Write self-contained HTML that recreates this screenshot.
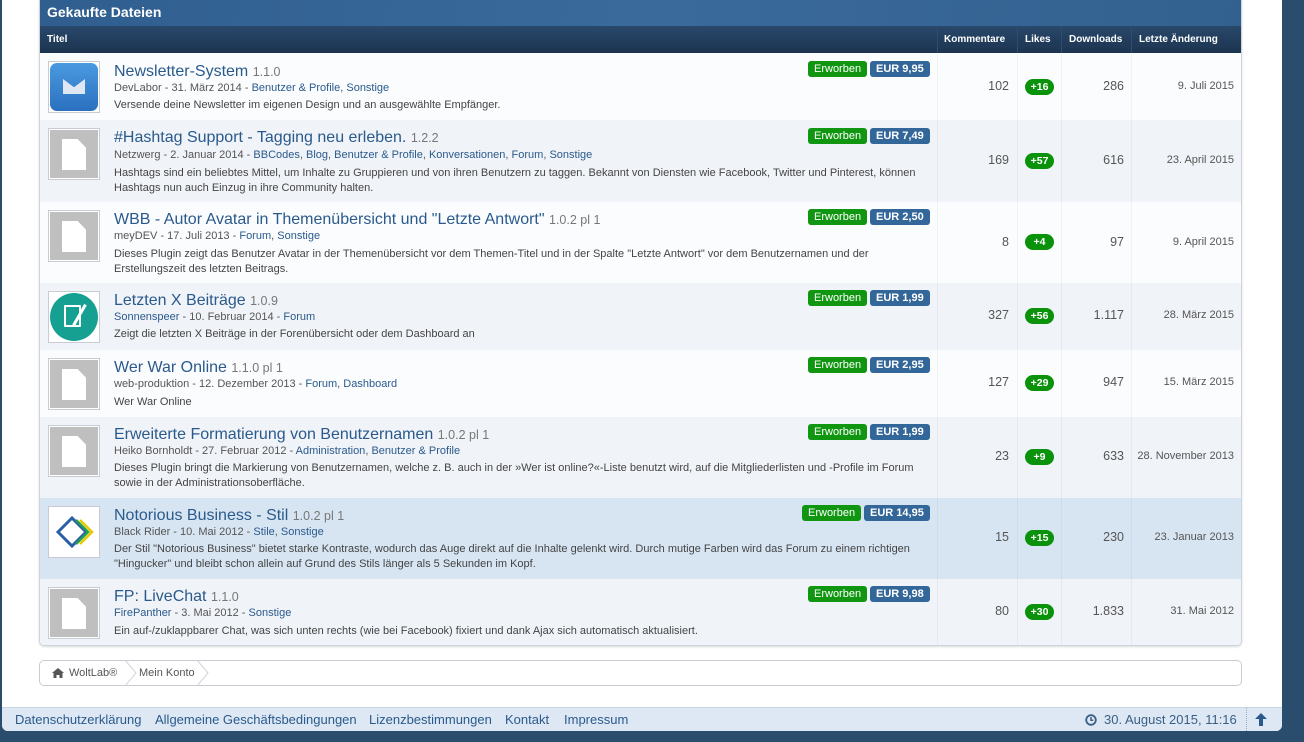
<!DOCTYPE html>
<html><head><meta charset="utf-8"><style>
*{margin:0;padding:0;box-sizing:border-box}
body{width:1304px;height:742px;background:#2a4d6e;font-family:"Liberation Sans",sans-serif;position:relative;overflow:hidden}
.page{position:absolute;left:2px;top:0;width:1280px;height:731px;background:#fff;border-radius:0 0 6px 6px}
.abs{position:absolute}
.box{position:absolute;left:37px;top:0;width:1203px;height:646px;border:1px solid #ccd4de;border-top:none;border-radius:0 0 5px 5px;overflow:hidden;box-shadow:0 1px 2px rgba(0,0,0,.15)}
.ttl{position:absolute;left:0;top:0;width:1202px;height:26px;background:linear-gradient(100deg,#2f5e8f,#3a6a9c 50%,#33618f);color:#fff;font-weight:bold;font-size:14px;line-height:25px;padding-left:7px}
.hd{position:absolute;left:0;top:26px;width:1202px;height:27px;background:linear-gradient(#29486b,#1c344f);color:#fff;font-weight:bold;font-size:10px;line-height:27px}
.hd span{position:absolute;top:0}
.row{position:absolute;left:0;width:1202px}
.row .ic{position:absolute;left:8px;top:8px;width:52px;height:52px;border:1px solid #c8ccd2;background:#fff;padding:1px}
.doc{width:48px;height:48px;background:#bfbfbf;position:relative}
.doc:after{content:"";position:absolute;left:12px;top:9px;width:24px;height:31px;background:#fff;clip-path:polygon(0 0,65% 0,100% 28%,100% 100%,0 100%)}
.t{position:absolute;left:74px;font-size:16px;color:#2a5a8c;white-space:nowrap;margin-top:1px}
.t small{font-size:12.5px;color:#777}
.m{position:absolute;left:74px;font-size:11px;color:#555;white-space:nowrap}
.m a{color:#2a5a8c;text-decoration:none}
.d{position:absolute;left:74px;width:810px;font-size:11px;line-height:14.5px;color:#444}
.b{position:absolute;height:16px;line-height:16px;font-size:11px;color:#fff;border-radius:3px;padding:0 6px;margin-left:-3px}
.g{background:#119611}.bl{background:#336699;font-weight:bold}
.n{position:absolute;font-size:12.5px;color:#555;text-align:right}
.lk{position:absolute;left:985px;width:29px;height:16px;border-radius:8px;background:#0a920a;color:#fff;font-weight:bold;font-size:10.5px;line-height:16px;text-align:center}
.col{position:absolute;top:0;bottom:0;width:1px;background:rgba(0,0,0,.04)}
</style></head><body>
<div class="page">
<div class="box">
<div class="ttl">Gekaufte Dateien</div>
<div class="hd"><span style="left:7px">Titel</span><span style="left:904px">Kommentare</span><span style="left:985px">Likes</span><span style="left:1029px">Downloads</span><span style="left:1099px">Letzte Änderung</span>
<div class="col" style="left:897px;background:#2f4e6f"></div><div class="col" style="left:977px;background:#2f4e6f"></div><div class="col" style="left:1021px;background:#2f4e6f"></div><div class="col" style="left:1091px;background:#2f4e6f"></div></div>

<div class="row" style="top:53px;height:67px;background:#fbfcfe">
<div class="ic"><div style="width:48px;height:48px;border-radius:7px;background:linear-gradient(#4a9ae0,#2a70bf);position:relative"><div style="position:absolute;left:13px;top:16px;width:22px;height:15px;background:#dfe8f2;clip-path:polygon(0 0,50% 55%,100% 0,100% 100%,0 100%)"></div></div></div>
<div class="t" style="top:9px">Newsletter-System <small>1.1.0</small></div>
<div class="m" style="top:29px">DevLabor - 31. März 2014 - <a>Benutzer &amp; Profile</a>, <a>Sonstige</a></div>
<div class="d" style="top:45px">Versende deine Newsletter im eigenen Design und an ausgewählte Empfänger.</div>
<div class="b g" style="left:771px;top:8px">Erworben</div><div class="b bl" style="left:833px;top:8px">EUR 9,95</div>
<div class="n" style="left:900px;width:69px;top:26px">102</div><div class="lk" style="top:26px">+16</div>
<div class="n" style="left:1020px;width:64px;top:26px">286</div><div class="n" style="left:1090px;width:104px;top:27px;font-size:11px">9. Juli 2015</div></div>

<div class="row" style="top:120px;height:82px;background:#f0f3f8">
<div class="ic"><div class="doc"></div></div>
<div class="t" style="top:8px">#Hashtag Support - Tagging neu erleben. <small>1.2.2</small></div>
<div class="m" style="top:29px">Netzwerg - 2. Januar 2014 - <a>BBCodes</a>, <a>Blog</a>, <a>Benutzer &amp; Profile</a>, <a>Konversationen</a>, <a>Forum</a>, <a>Sonstige</a></div>
<div class="d" style="top:46px">Hashtags sind ein beliebtes Mittel, um Inhalte zu Gruppieren und von ihren Benutzern zu taggen. Bekannt von Diensten wie Facebook, Twitter und Pinterest, können Hashtags nun auch Einzug in ihre Community halten.</div>
<div class="b g" style="left:771px;top:8px">Erworben</div><div class="b bl" style="left:833px;top:8px">EUR 7,49</div>
<div class="n" style="left:900px;width:69px;top:33px">169</div><div class="lk" style="top:33px">+57</div>
<div class="n" style="left:1020px;width:64px;top:33px">616</div><div class="n" style="left:1090px;width:104px;top:34px;font-size:11px">23. April 2015</div></div>

<div class="row" style="top:202px;height:81px;background:#fbfcfe">
<div class="ic"><div class="doc"></div></div>
<div class="t" style="top:8px">WBB - Autor Avatar in Themenübersicht und "Letzte Antwort" <small>1.0.2 pl 1</small></div>
<div class="m" style="top:28px">meyDEV - 17. Juli 2013 - <a>Forum</a>, <a>Sonstige</a></div>
<div class="d" style="top:45px">Dieses Plugin zeigt das Benutzer Avatar in der Themenübersicht vor dem Themen-Titel und in der Spalte "Letzte Antwort" vor dem Benutzernamen und der Erstellungszeit des letzten Beitrags.</div>
<div class="b g" style="left:771px;top:7px">Erworben</div><div class="b bl" style="left:833px;top:7px">EUR 2,50</div>
<div class="n" style="left:900px;width:69px;top:33px">8</div><div class="lk" style="top:32px">+4</div>
<div class="n" style="left:1020px;width:64px;top:33px">97</div><div class="n" style="left:1090px;width:104px;top:34px;font-size:11px">9. April 2015</div></div>

<div class="row" style="top:283px;height:67px;background:#f0f3f8">
<div class="ic"><div style="width:48px;height:48px;border-radius:50%;background:#15a091;position:relative"><div style="position:absolute;left:14px;top:12px;width:17px;height:22px;border:2px solid #fff;border-radius:1px"></div><div style="position:absolute;left:28px;top:10px;width:3px;height:24px;background:#fff;transform:rotate(30deg)"></div></div></div>
<div class="t" style="top:8px">Letzten X Beiträge <small>1.0.9</small></div>
<div class="m" style="top:28px"><a>Sonnenspeer</a> - 10. Februar 2014 - <a>Forum</a></div>
<div class="d" style="top:44px">Zeigt die letzten X Beiträge in der Forenübersicht oder dem Dashboard an</div>
<div class="b g" style="left:771px;top:7px">Erworben</div><div class="b bl" style="left:833px;top:7px">EUR 1,99</div>
<div class="n" style="left:900px;width:69px;top:25px">327</div><div class="lk" style="top:25px">+56</div>
<div class="n" style="left:1020px;width:64px;top:25px">1.117</div><div class="n" style="left:1090px;width:104px;top:26px;font-size:11px">28. März 2015</div></div>

<div class="row" style="top:350px;height:67px;background:#fbfcfe">
<div class="ic"><div class="doc"></div></div>
<div class="t" style="top:8px">Wer War Online <small>1.1.0 pl 1</small></div>
<div class="m" style="top:28px">web-produktion - 12. Dezember 2013 - <a>Forum</a>, <a>Dashboard</a></div>
<div class="d" style="top:45px">Wer War Online</div>
<div class="b g" style="left:771px;top:7px">Erworben</div><div class="b bl" style="left:833px;top:7px">EUR 2,95</div>
<div class="n" style="left:900px;width:69px;top:25px">127</div><div class="lk" style="top:25px">+29</div>
<div class="n" style="left:1020px;width:64px;top:25px">947</div><div class="n" style="left:1090px;width:104px;top:26px;font-size:11px">15. März 2015</div></div>

<div class="row" style="top:417px;height:81px;background:#f0f3f8">
<div class="ic"><div class="doc"></div></div>
<div class="t" style="top:8px">Erweiterte Formatierung von Benutzernamen <small>1.0.2 pl 1</small></div>
<div class="m" style="top:28px">Heiko Bornholdt - 27. Februar 2012 - <a>Administration</a>, <a>Benutzer &amp; Profile</a></div>
<div class="d" style="top:44px">Dieses Plugin bringt die Markierung von Benutzernamen, welche z. B. auch in der »Wer ist online?«-Liste benutzt wird, auf die Mitgliederlisten und -Profile im Forum sowie in der Administrationsoberfläche.</div>
<div class="b g" style="left:771px;top:7px">Erworben</div><div class="b bl" style="left:833px;top:7px">EUR 1,99</div>
<div class="n" style="left:900px;width:69px;top:32px">23</div><div class="lk" style="top:32px">+9</div>
<div class="n" style="left:1020px;width:64px;top:32px">633</div><div class="n" style="left:1090px;width:104px;top:33px;font-size:11px">28. November 2013</div></div>

<div class="row" style="top:498px;height:81px;background:#d7e5f3">
<div class="ic"><svg width="48" height="48" viewBox="0 0 48 48"><path d="M8 24 L22 10 L36 24 L22 38 Z" fill="none" stroke="#2a5fa8" stroke-width="3"/><path d="M26 12 L38 24 L26 36" fill="none" stroke="#22a050" stroke-width="2.5"/><path d="M30 12 L42 24 L30 36" fill="none" stroke="#e8c800" stroke-width="2.5"/></svg></div>
<div class="t" style="top:8px">Notorious Business - Stil <small>1.0.2 pl 1</small></div>
<div class="m" style="top:28px">Black Rider - 10. Mai 2012 - <a>Stile</a>, <a>Sonstige</a></div>
<div class="d" style="top:44px">Der Stil "Notorious Business" bietet starke Kontraste, wodurch das Auge direkt auf die Inhalte gelenkt wird. Durch mutige Farben wird das Forum zu einem richtigen "Hingucker" und bleibt schon allein auf Grund des Stils länger als 5 Sekunden im Kopf.</div>
<div class="b g" style="left:765px;top:7px">Erworben</div><div class="b bl" style="left:827px;top:7px">EUR 14,95</div>
<div class="n" style="left:900px;width:69px;top:32px">15</div><div class="lk" style="top:32px">+15</div>
<div class="n" style="left:1020px;width:64px;top:32px">230</div><div class="n" style="left:1090px;width:104px;top:33px;font-size:11px">23. Januar 2013</div></div>

<div class="row" style="top:579px;height:67px;background:#f0f3f8">
<div class="ic"><div class="doc"></div></div>
<div class="t" style="top:8px">FP: LiveChat <small>1.1.0</small></div>
<div class="m" style="top:28px"><a>FirePanther</a> - 3. Mai 2012 - <a>Sonstige</a></div>
<div class="d" style="top:45px">Ein auf-/zuklappbarer Chat, was sich unten rechts (wie bei Facebook) fixiert und dank Ajax sich automatisch aktualisiert.</div>
<div class="b g" style="left:771px;top:7px">Erworben</div><div class="b bl" style="left:833px;top:7px">EUR 9,98</div>
<div class="n" style="left:900px;width:69px;top:25px">80</div><div class="lk" style="top:25px">+30</div>
<div class="n" style="left:1020px;width:64px;top:25px">1.833</div><div class="n" style="left:1090px;width:104px;top:26px;font-size:11px">31. Mai 2012</div></div>

<div class="col" style="left:897px;top:53px;height:593px"></div><div class="col" style="left:977px;top:53px;height:593px"></div><div class="col" style="left:1021px;top:53px;height:593px"></div><div class="col" style="left:1091px;top:53px;height:593px"></div>
</div>

<div class="abs" style="left:37px;top:660px;width:1203px;height:26px;border:1px solid #c8ccd2;border-radius:5px;font-size:11px;color:#555;line-height:24px">
<svg class="abs" style="left:12px;top:7px" width="12" height="10" viewBox="0 0 12 10"><path d="M6 0 L12 5 L10.5 5 L10.5 10 L7.5 10 L7.5 7 L4.5 7 L4.5 10 L1.5 10 L1.5 5 L0 5 Z" fill="#555"/></svg>
<span class="abs" style="left:29px">WoltLab®</span>
<svg class="abs" style="left:84px;top:-1px" width="14" height="26"><path d="M1 0 L12 13 L1 26" fill="none" stroke="#d0d4da"/></svg>
<span class="abs" style="left:99px">Mein Konto</span>
<svg class="abs" style="left:156px;top:-1px" width="14" height="26"><path d="M1 0 L12 13 L1 26" fill="none" stroke="#d0d4da"/></svg>
</div>

<div class="abs" style="left:0;top:707px;width:1280px;height:24px;background:#dde8f4;border-top:1px solid #c6d5e6;border-radius:0 0 6px 6px;font-size:13px;color:#2a5a8c;line-height:23px">
<span class="abs" style="left:13px">Datenschutzerklärung</span>
<span class="abs" style="left:153px">Allgemeine Geschäftsbedingungen</span>
<span class="abs" style="left:367px">Lizenzbestimmungen</span>
<span class="abs" style="left:503px">Kontakt</span>
<span class="abs" style="left:562px">Impressum</span>
<svg class="abs" style="left:1083px;top:6px" width="12" height="12"><circle cx="6" cy="6" r="4.8" fill="none" stroke="#3a5f85" stroke-width="1.8"/><path d="M6 3 V6.3 H8.3" fill="none" stroke="#3a5f85" stroke-width="1.5"/></svg>
<span class="abs" style="left:1102px;color:#3a5f85">30. August 2015, 11:16</span>
<span class="abs" style="left:1244px;top:0;height:23px;border-left:1px dotted #9ab"></span>
<svg class="abs" style="left:1253px;top:5px" width="12" height="13"><path d="M6 0 L12 6 L8 6 L8 13 L4 13 L4 6 L0 6 Z" fill="#2a5a8c"/></svg>
</div>
</div>
</body></html>
